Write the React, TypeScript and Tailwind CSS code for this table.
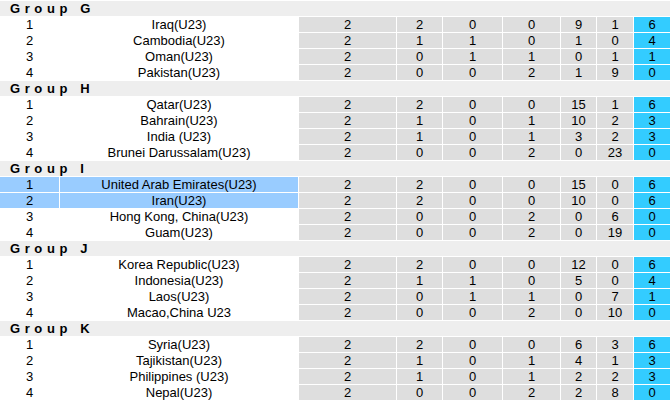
import React from "react";

type Row = [string, number, number, number, number, number, number, number, boolean?];
type Group = { name: string; rows: Row[] };

const groups: Group[] = [
  {
    name: "G",
    rows: [
      ["Iraq(U23)", 2, 2, 0, 0, 9, 1, 6],
      ["Cambodia(U23)", 2, 1, 1, 0, 1, 0, 4],
      ["Oman(U23)", 2, 0, 1, 1, 0, 1, 1],
      ["Pakistan(U23)", 2, 0, 0, 2, 1, 9, 0],
    ],
  },
  {
    name: "H",
    rows: [
      ["Qatar(U23)", 2, 2, 0, 0, 15, 1, 6],
      ["Bahrain(U23)", 2, 1, 0, 1, 10, 2, 3],
      ["India (U23)", 2, 1, 0, 1, 3, 2, 3],
      ["Brunei Darussalam(U23)", 2, 0, 0, 2, 0, 23, 0],
    ],
  },
  {
    name: "I",
    rows: [
      ["United Arab Emirates(U23)", 2, 2, 0, 0, 15, 0, 6, true],
      ["Iran(U23)", 2, 2, 0, 0, 10, 0, 6, true],
      ["Hong Kong, China(U23)", 2, 0, 0, 2, 0, 6, 0],
      ["Guam(U23)", 2, 0, 0, 2, 0, 19, 0],
    ],
  },
  {
    name: "J",
    rows: [
      ["Korea Republic(U23)", 2, 2, 0, 0, 12, 0, 6],
      ["Indonesia(U23)", 2, 1, 1, 0, 5, 0, 4],
      ["Laos(U23)", 2, 0, 1, 1, 0, 7, 1],
      ["Macao,China U23", 2, 0, 0, 2, 0, 10, 0],
    ],
  },
  {
    name: "K",
    rows: [
      ["Syria(U23)", 2, 2, 0, 0, 6, 3, 6],
      ["Tajikistan(U23)", 2, 1, 0, 1, 4, 1, 3],
      ["Philippines (U23)", 2, 1, 0, 1, 2, 2, 3],
      ["Nepal(U23)", 2, 0, 0, 2, 2, 8, 0],
    ],
  },
];

const cols =
  "grid grid-cols-[59px_238px_97px_45px_59px_57px_35px_36px_36px] gap-x-px";

export default function App() {
  return (
    <div
      className="w-[671px] h-[402px] bg-white flex flex-col gap-y-px pt-px overflow-hidden text-black"
      style={{ fontFamily: '"Liberation Sans", Arial, sans-serif' }}
    >
      {groups.map((g) => (
        <React.Fragment key={g.name}>
          <div className="h-[15px] w-[670px] bg-[#eeeeee] flex items-center pl-[10px] text-[13px] font-bold leading-[15px] tracking-[4.6px]">
            Group&nbsp;{g.name}
          </div>
          {g.rows.map((r, i) => {
            const hl = r[8];
            const nameBg = hl ? "bg-[#99ccff]" : "bg-white";
            return (
              <div key={i} className={`${cols} h-[15px] text-[13px] leading-[15px]`}>
                <div className={`${nameBg} text-center`}>{i + 1}</div>
                <div className={`${nameBg} text-center whitespace-nowrap`}>{r[0]}</div>
                <div className="bg-[#dedede] text-center">{r[1]}</div>
                <div className="bg-[#dedede] text-center">{r[2]}</div>
                <div className="bg-[#dedede] text-center">{r[3]}</div>
                <div className="bg-[#dedede] text-center">{r[4]}</div>
                <div className="bg-[#dedede] text-center">{r[5]}</div>
                <div className="bg-[#dedede] text-center">{r[6]}</div>
                <div className="bg-[#33ccff] text-center">{r[7]}</div>
              </div>
            );
          })}
        </React.Fragment>
      ))}
    </div>
  );
}
